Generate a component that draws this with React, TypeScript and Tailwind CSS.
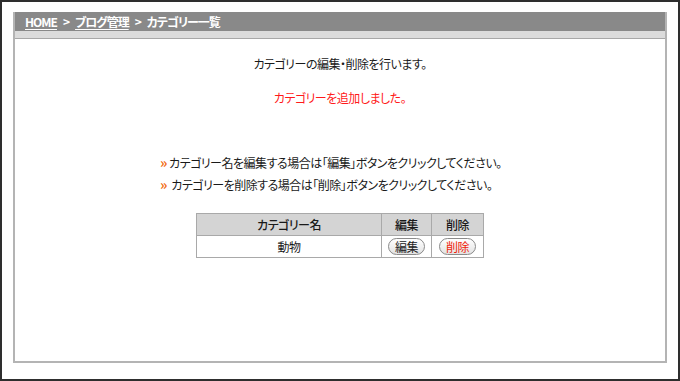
export default function App() {
    const font = { fontFamily: '"Noto Sans CJK JP", "Noto Sans", sans-serif', fontFeatureSettings: '"palt"' }

    return (
        <div className="h-[381px] w-[680px] overflow-hidden border-2 border-[#2e2e2e] bg-white text-[12px] tracking-[-0.5px] text-[#1a1a1a]" style={ font }>
            <div className="ml-[11px] mt-[10px] flex h-[351px] w-[654px] flex-col border-x-2 border-b-2 border-[#b4b4b4]">
                <div className="flex h-[19px] items-center gap-[6px] bg-[#898989] pl-[10px] text-[12px] font-bold leading-none tracking-[-1px] text-white">
                    <a className="underline underline-offset-2">HOME</a>
                    <span>&gt;</span>
                    <a className="underline underline-offset-2">ブログ管理</a>
                    <span>&gt;</span>
                    <span>カテゴリー一覧</span>
                </div>
                <div className="h-[8px] border-b border-[#a8a8a8] bg-[#dcdcdc]" />

                <div className="flex flex-1 flex-col">
                    <p className="mt-[17px] text-center leading-[16px]">カテゴリーの編集・削除を行います。</p>
                    <p className="mt-[18px] text-center leading-[16px] text-[#ff1a1a]">カテゴリーを追加しました。</p>

                    <ul className="ml-[145px] mt-[46px] leading-[22px]">
                        <li>
                            <span className="text-[14px] font-bold leading-none text-[#f26a10]">»</span> カテゴリー名を編集する場合は「編集」ボタンをクリックしてください。
                        </li>
                        <li>
                            <span className="text-[14px] font-bold leading-none text-[#f26a10]">»</span>&nbsp; カテゴリーを削除する場合は「削除」ボタンをクリックしてください。
                        </li>
                    </ul>

                    <table className="mx-auto mt-[17px] w-[288px] border-collapse border border-[#a9a9a9] text-center">
                        <thead>
                            <tr className="h-[22px] bg-[#d4d4d4]">
                                <th className="w-[185px] border border-[#a9a9a9] font-medium">カテゴリー名</th>
                                <th className="w-[50px] border border-[#a9a9a9] font-medium">編集</th>
                                <th className="border border-[#a9a9a9] font-medium">削除</th>
                            </tr>
                        </thead>
                        <tbody>
                            <tr className="h-[22px]">
                                <td className="border border-[#a9a9a9]">動物</td>
                                <td className="border border-[#a9a9a9]">
                                    <button className="h-[17px] rounded-full border border-[#8a8a8a] bg-gradient-to-b from-white to-[#e2e2e2] px-[6px] text-[12px] leading-none text-[#222]">編集</button>
                                </td>
                                <td className="border border-[#a9a9a9]">
                                    <button className="h-[17px] rounded-full border border-[#8a8a8a] bg-gradient-to-b from-white to-[#e2e2e2] px-[6px] text-[12px] leading-none text-[#f01d0a]">削除</button>
                                </td>
                            </tr>
                        </tbody>
                    </table>
                </div>
            </div>
        </div>
    )
}
